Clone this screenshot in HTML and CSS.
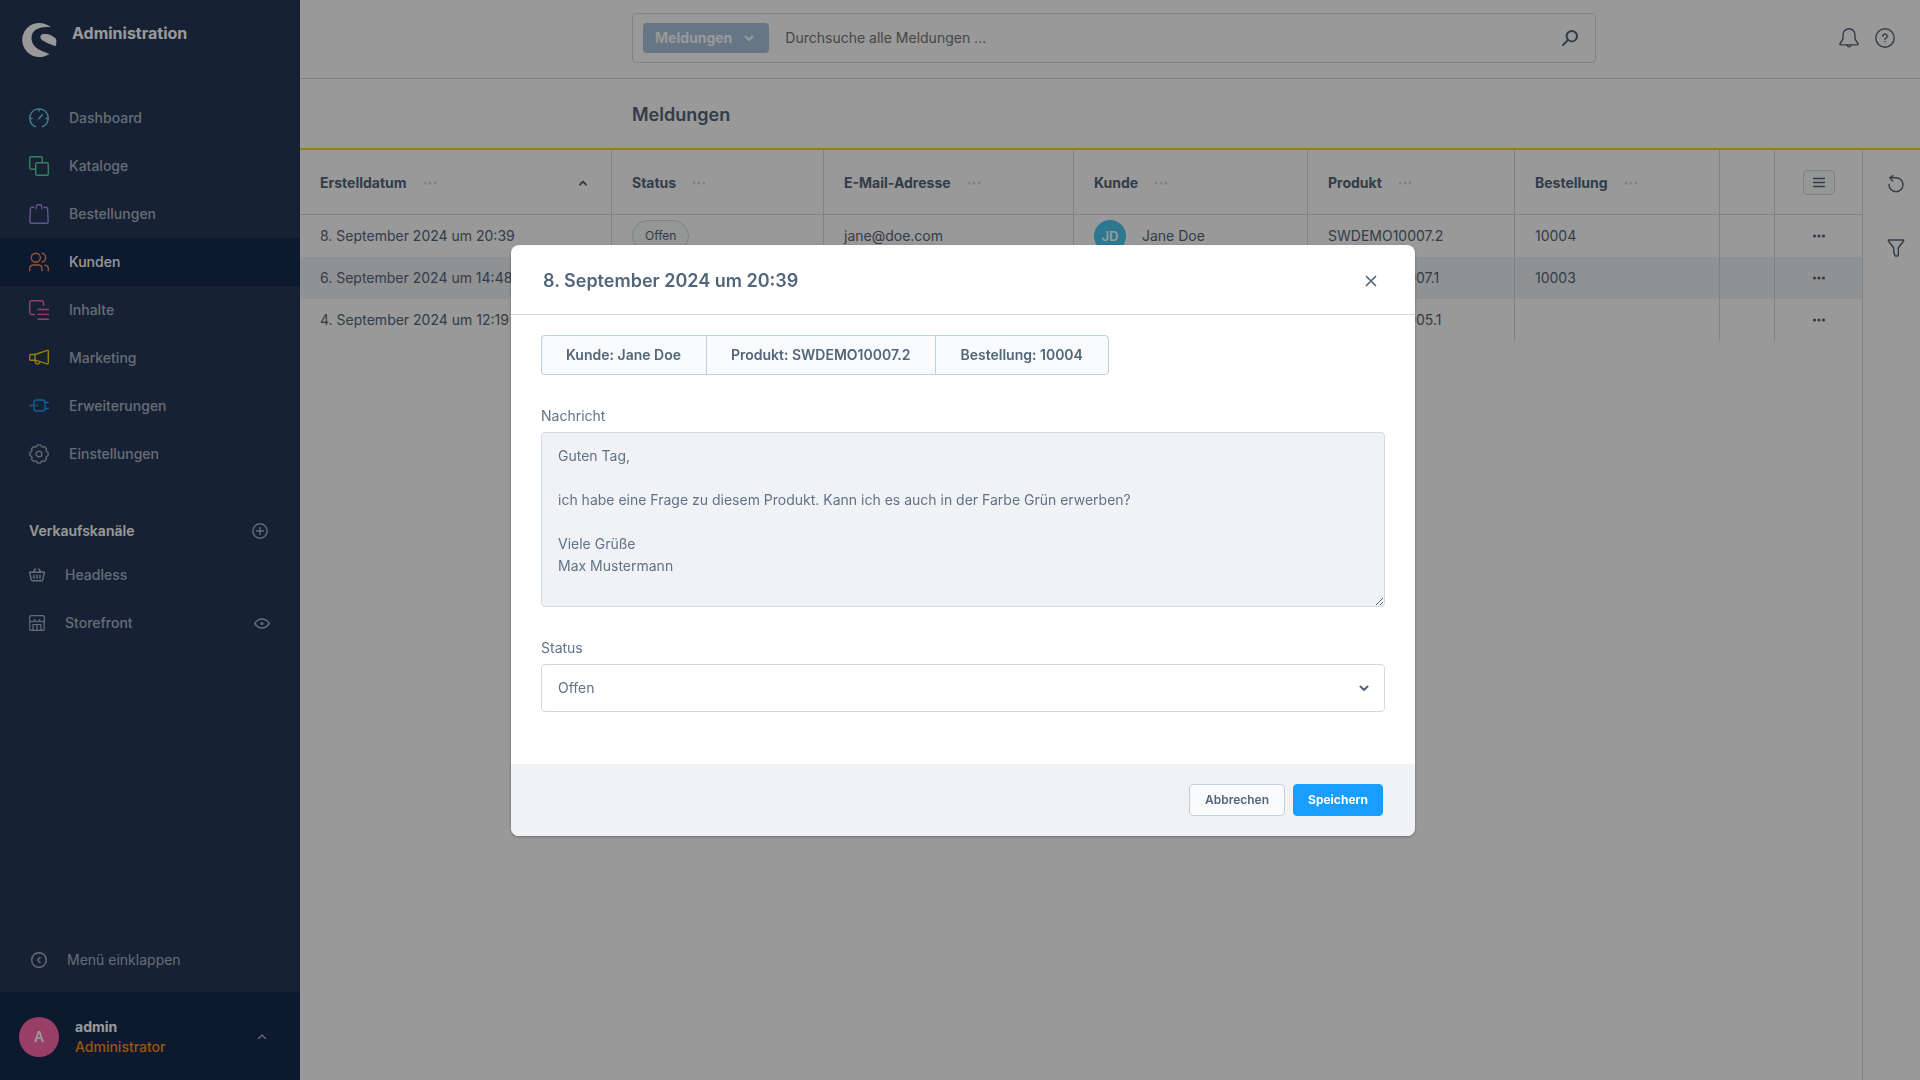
FILE: index.html
```
<!DOCTYPE html>
<html lang="de">
<head>
<meta charset="utf-8">
<meta name="viewport" content="width=device-width, initial-scale=1">
<title>Meldungen</title>
<link rel="stylesheet" href="styles.css">
</head>
<body>
<div class="app">
  <aside class="sidebar">
    <header class="brand">
      <svg class="brand-logo" viewBox="0 0 35 34" aria-hidden="true"><path d="M28.700 4.300C26 1.800 21.500 0 17.200 0a17 17 0 0 0 0 34c3.800 0 7.300-1.100 10.300-3.100C21 28.300 9.500 25.500 9.500 15 9.500 6 19 3.300 28.700 4.300z"/><path d="M21.500 11c-3.500.5-3.900 3.500-2 5.500 2.500 2.500 9.500 5 14 6.800 1-2.800 1.100-5.300.5-7.500-3-3.300-8-5.400-12.500-4.800z"/></svg>
      <span class="brand-name">Administration</span>
    </header>
    <nav class="main-nav">
      <a class="nav-item" href="#dashboard"><svg class="icon icon-20 c-cyan" viewBox="0 0 20 20"><path d="M6.500 18.500H6.200a9.200 9.200 0 1 1 7.600 0h-.3M10 1v2M1 10.500h2M17 10.500h2M9.800 10.800l3.500-4"/></svg>Dashboard</a>
      <a class="nav-item" href="#kataloge"><svg class="icon icon-20 c-green" viewBox="0 0 20 20"><rect x="6.700" y="6.700" width="12.600" height="12.600" rx="1.500"/><path d="M6.700 13.300H2.200a1.500 1.500 0 0 1-1.500-1.500V2.200A1.500 1.500 0 0 1 2.200.7h9.600a1.500 1.500 0 0 1 1.500 1.500v4.500"/></svg>Kataloge</a>
      <a class="nav-item" href="#bestellungen"><svg class="icon icon-20 c-violet" viewBox="0 0 20 20"><path d="M4.800 3.300H3.400a2 2 0 0 0-2 1.900L.8 17.500a1.700 1.700 0 0 0 1.700 1.800h15a1.700 1.700 0 0 0 1.700-1.800L18.600 5.200a2 2 0 0 0-2-1.900h-1.400M7.300 4.500V2.500A1.700 1.700 0 0 1 9 .8h2a1.700 1.700 0 0 1 1.700 1.700v2"/></svg>Bestellungen</a>
      <a class="nav-item active" href="#kunden"><svg class="icon icon-20 c-orange" viewBox="0 0 20 20"><circle cx="6.800" cy="5.700" r="4.500"/><path d="M.7 18.800v-2.300a3.500 3.500 0 0 1 3.500-3.500h5.300a3.500 3.500 0 0 1 3.500 3.500v2.300M13.300 1.300a4.500 4.500 0 0 1 0 8.700M15.700 13.100a3.500 3.500 0 0 1 3.600 3.400v2.300"/></svg>Kunden</a>
      <a class="nav-item" href="#inhalte"><svg class="icon icon-20 c-pink" viewBox="0 0 20 20"><path d="M5.500 14.500H2.700a2 2 0 0 1-2-2v-9.800a2 2 0 0 1 2-2h9.800a2 2 0 0 1 2 2v2.800M9 9.500h10.500M9 14.400h10.500M9 19.300h10.500"/></svg>Inhalte</a>
      <a class="nav-item" href="#marketing"><svg class="icon icon-20 c-yellow" viewBox="0 0 20 20"><path d="M6 6.500l12.200-4.200a.8.8 0 0 1 1.100.7v12a.8.8 0 0 1-1.100.8L6 12.200zM6 6.500H1.700a1 1 0 0 0-1 1v3.700a1 1 0 0 0 1 1H6M6.200 12.200v1.600a2.300 2.300 0 0 0 4.500.600"/></svg>Marketing</a>
      <a class="nav-item" href="#erweiterungen"><svg class="icon icon-20 c-blue" viewBox="0 0 20 20"><rect x="5" y="4" width="11" height="11" rx="2.500"/><path d="M.8 9.500H5M16 6.500h3.300M16 12.500h3.300M8 9v1"/></svg>Erweiterungen</a>
      <a class="nav-item" href="#einstellungen"><svg class="icon icon-20 c-grey" viewBox="0 0 20 20"><path d="M19.100 8.400v3.200q-3.100.9-1.600 3.700l-2.200 2.200q-2.800-1.500-3.700 1.600H8.400q-.9-3.100-3.700-1.600l-2.200-2.200q1.500-2.800-1.600-3.700V8.400Q4 7.500 2.500 4.700l2.200-2.200Q7.500 4 8.400.9h3.200q.9 3.100 3.700 1.600l2.200 2.200Q16 7.500 19.100 8.400z"/><circle cx="10" cy="10" r="2.900"/></svg>Einstellungen</a>
    </nav>
    <section class="channels">
      <div class="channels-head">
        <h2 class="channels-title">Verkaufskanäle</h2>
        <button class="icon-button" type="button" aria-label="Verkaufskanal hinzufügen"><svg class="icon icon-16" viewBox="0 0 16 16"><circle cx="8" cy="8" r="7.200"/><path d="M8 4.500v7M4.500 8h7"/></svg></button>
      </div>
      <div class="channel">
        <a class="channel-link" href="#headless"><svg class="icon icon-16" viewBox="0 0 16 16"><path d="M.6 5.200h14.800v1.300a1 1 0 0 1-.6.900l-1 5.200a1.500 1.500 0 0 1-1.500 1.100H3.700a1.500 1.500 0 0 1-1.500-1.100l-1-5.200a1 1 0 0 1-.6-.9zM4.500 4.500l1.800-2.500M11.500 4.500L9.700 2M5 8.300v3M8 8.300v3M11 8.300v3"/></svg>Headless</a>
      </div>
      <div class="channel">
        <a class="channel-link" href="#storefront"><svg class="icon icon-16 thin" viewBox="0 0 16 16"><path d="M.8 6v8.200a1.200 1.200 0 0 0 1.200 1.200h12a1.200 1.200 0 0 0 1.200-1.200V6M.6 4.500V2.100A1.500 1.500 0 0 1 2.100.6h11.800a1.500 1.500 0 0 1 1.500 1.500v2.400M.6 4.500c0 3 4.900 3 4.900 0 0 3 5 3 5 0 0 3 4.900 3 4.900 0M4 15.400V9.500h8v5.900M8 9.500v5.900"/></svg>Storefront</a>
        <button class="icon-button" type="button" aria-label="Storefront ansehen"><svg class="icon icon-16" viewBox="0 0 16 16"><path d="M.7 8.500C2.500 5.700 5 4 8 4s5.500 1.700 7.300 4.500C13.500 11.300 11 13 8 13S2.500 11.300.7 8.500z"/><circle cx="8" cy="8.500" r=".8"/></svg></button>
      </div>
    </section>
    <button class="collapse" type="button"><svg class="icon icon-16" viewBox="0 0 16 16"><circle cx="8" cy="8" r="7.300"/><path d="M9 5.500L6.500 8 9 10.500"/></svg>Menü einklappen</button>
    <footer class="user">
      <span class="user-avatar">A</span>
      <span class="user-text"><span class="user-name">admin</span><span class="user-role">Administrator</span></span>
      <button class="icon-button" type="button" aria-label="Benutzermenü"><svg class="icon icon-16" viewBox="0 0 16 16"><path d="M4.500 9.500L8 6l3.500 3.500"/></svg></button>
    </footer>
  </aside>

  <main class="page">
    <header class="topbar">
      <div class="search">
        <button class="search-type" type="button">Meldungen<svg class="icon icon-16 bold" viewBox="0 0 16 16"><path d="M4.500 6.500L8 10l3.500-3.500"/></svg></button>
        <input class="search-input" type="search" aria-label="Suche" placeholder="Durchsuche alle Meldungen ...">
        <button class="icon-button" type="button" aria-label="Suchen"><svg class="icon icon-16 bold" viewBox="0 0 16 16"><circle cx="9.800" cy="6.200" r="5.200"/><path d="M6 10l-5 5"/></svg></button>
      </div>
      <div class="topbar-tools">
        <button class="icon-button" type="button" aria-label="Benachrichtigungen"><svg class="icon icon-20" viewBox="0 0 20 20"><path d="M10 .8a6 6 0 0 0-6 6V11l-2.900 4.500a.9.9 0 0 0 .8 1.400h16.200a.9.9 0 0 0 .8-1.400L16 11V6.800a6 6 0 0 0-6-6zM8 17.500a2.200 2.200 0 0 0 4 0"/></svg></button>
        <button class="icon-button" type="button" aria-label="Hilfe"><svg class="icon icon-20" viewBox="0 0 20 20"><circle cx="10" cy="10" r="9.200"/><path d="M7.900 8.200a2.100 2.100 0 1 1 3.200 1.800c-.7.400-1.100.8-1.100 1.500M10 13.700v.1"/></svg></button>
      </div>
    </header>
    <div class="titlebar"><h1 class="page-title">Meldungen</h1></div>
    <div class="content">
      <div class="grid-area">
        <table class="grid">
          <colgroup><col class="w-date"><col class="w-status"><col class="w-mail"><col class="w-customer"><col class="w-product"><col class="w-order"><col class="w-spare"><col class="w-actions"></colgroup>
          <thead>
            <tr>
              <th scope="col"><div class="th">Erstelldatum<svg class="dots" viewBox="0 0 14 4"><circle cx="2" cy="2" r="1.500"/><circle cx="7" cy="2" r="1.500"/><circle cx="12" cy="2" r="1.500"/></svg><svg class="icon icon-16 bold sort" viewBox="0 0 16 16"><path d="M5 9.600L8 6.600l3 3"/></svg></div></th>
              <th scope="col"><div class="th">Status<svg class="dots" viewBox="0 0 14 4"><circle cx="2" cy="2" r="1.500"/><circle cx="7" cy="2" r="1.500"/><circle cx="12" cy="2" r="1.500"/></svg></div></th>
              <th scope="col"><div class="th">E-Mail-Adresse<svg class="dots" viewBox="0 0 14 4"><circle cx="2" cy="2" r="1.500"/><circle cx="7" cy="2" r="1.500"/><circle cx="12" cy="2" r="1.500"/></svg></div></th>
              <th scope="col"><div class="th">Kunde<svg class="dots" viewBox="0 0 14 4"><circle cx="2" cy="2" r="1.500"/><circle cx="7" cy="2" r="1.500"/><circle cx="12" cy="2" r="1.500"/></svg></div></th>
              <th scope="col"><div class="th">Produkt<svg class="dots" viewBox="0 0 14 4"><circle cx="2" cy="2" r="1.500"/><circle cx="7" cy="2" r="1.500"/><circle cx="12" cy="2" r="1.500"/></svg></div></th>
              <th scope="col"><div class="th">Bestellung<svg class="dots" viewBox="0 0 14 4"><circle cx="2" cy="2" r="1.500"/><circle cx="7" cy="2" r="1.500"/><circle cx="12" cy="2" r="1.500"/></svg></div></th>
              <td></td>
              <td class="actions"><button class="columns-button" type="button" aria-label="Spalten"><svg class="icon icon-12" viewBox="0 0 12 12"><path d="M.5 2.500h11M.5 6.500h11M.5 10.500h11"/></svg></button></td>
            </tr>
          </thead>
          <tbody>
            <tr>
              <td>8. September 2024 um 20:39</td>
              <td><span class="badge">Offen</span></td>
              <td>jane@doe.com</td>
              <td><div class="customer"><span class="customer-avatar">JD</span>Jane Doe</div></td>
              <td>SWDEMO10007.2</td>
              <td>10004</td>
              <td></td>
              <td class="actions"><button class="icon-button" type="button" aria-label="Aktionen"><svg class="dots dark" viewBox="0 0 14 4"><circle cx="2.500" cy="2" r="1.600"/><circle cx="7" cy="2" r="1.600"/><circle cx="11.500" cy="2" r="1.600"/></svg></button></td>
            </tr>
            <tr>
              <td>6. September 2024 um 14:48</td>
              <td></td>
              <td></td>
              <td></td>
              <td>SWDEMO10007.1</td>
              <td>10003</td>
              <td></td>
              <td class="actions"><button class="icon-button" type="button" aria-label="Aktionen"><svg class="dots dark" viewBox="0 0 14 4"><circle cx="2.500" cy="2" r="1.600"/><circle cx="7" cy="2" r="1.600"/><circle cx="11.500" cy="2" r="1.600"/></svg></button></td>
            </tr>
            <tr>
              <td>4. September 2024 um 12:19</td>
              <td></td>
              <td></td>
              <td></td>
              <td>SWDEMO10005.1</td>
              <td></td>
              <td></td>
              <td class="actions"><button class="icon-button" type="button" aria-label="Aktionen"><svg class="dots dark" viewBox="0 0 14 4"><circle cx="2.500" cy="2" r="1.600"/><circle cx="7" cy="2" r="1.600"/><circle cx="11.500" cy="2" r="1.600"/></svg></button></td>
            </tr>
          </tbody>
        </table>
      </div>
      <div class="side-tools">
        <button class="icon-button" type="button" aria-label="Aktualisieren"><svg class="icon icon-18" viewBox="0 0 18 18"><path d="M2 9.500a7 7 0 1 0 7-6.800H3M6 .7L2.800 2.900l2.700 3"/></svg></button>
        <button class="icon-button" type="button" aria-label="Filter"><svg class="icon icon-18" viewBox="0 0 18 18"><path d="M2 1h14a.6.600 0 0 1 .5 1L11.300 9v7a1 1 0 0 1-1 1H8.700a1 1 0 0 1-.8-.6L6.700 13V9L1.500 2A.6.600 0 0 1 2 1z"/></svg></button>
      </div>
    </div>
  </main>
</div>

<div class="backdrop">
  <div class="modal" role="dialog" aria-modal="true" aria-labelledby="modal-title">
    <header class="modal-head">
      <h2 class="modal-title" id="modal-title">8. September 2024 um 20:39</h2>
      <button class="icon-button" type="button" aria-label="Schließen"><svg class="icon icon-16 close" viewBox="0 0 16 16"><path d="M3.500 3.500l9 9M12.500 3.500l-9 9"/></svg></button>
    </header>
    <div class="modal-body">
      <div class="button-group">
        <button class="group-button" type="button">Kunde: Jane Doe</button>
        <button class="group-button" type="button">Produkt: SWDEMO10007.2</button>
        <button class="group-button" type="button">Bestellung: 10004</button>
      </div>
      <div class="field">
        <label class="label" for="message">Nachricht</label>
        <textarea class="textarea" id="message" readonly>Guten Tag,

ich habe eine Frage zu diesem Produkt. Kann ich es auch in der Farbe Grün erwerben?

Viele Grüße
Max Mustermann</textarea>
      </div>
      <div class="field">
        <label class="label" for="status">Status</label>
        <div class="select-wrap">
          <select class="select" id="status"><option>Offen</option></select>
          <svg class="icon icon-16 bold select-arrow" viewBox="0 0 16 16"><path d="M4.500 6.500L8 10l3.500-3.500"/></svg>
        </div>
      </div>
    </div>
    <footer class="modal-foot">
      <button class="button" type="button">Abbrechen</button>
      <button class="button primary" type="button">Speichern</button>
    </footer>
  </div>
</div>
</body>
</html>
```
FILE: styles.css
```
*, *::before, *::after { box-sizing: border-box; }

:root {
  --text: #52667a;
  --text-soft: #5f7388;
  --border: #d1d9e0;
  --tint: #f0f2f5;
}

body {
  margin: 0;
  font: 400 14px/20px Inter, "Liberation Sans", sans-serif;
  color: var(--text);
  background: #fff;
}

h1, h2 { margin: 0; }
a { color: inherit; text-decoration: none; }

button, input, textarea, select { font: inherit; color: inherit; }

.icon {
  flex: none;
  display: block;
  fill: none;
  stroke: currentColor;
  stroke-width: 1.4;
  stroke-linecap: round;
  stroke-linejoin: round;
}
.icon-12 { width: 12px; height: 12px; }
.icon-16 { width: 16px; height: 16px; }
.icon-18 { width: 18px; height: 18px; }
.icon-20 { width: 20px; height: 20px; }
.thin { stroke-width: 1.2; }
.close { stroke-width: 1.7; }
.bold { stroke-width: 2; }

.icon-button {
  display: flex;
  padding: 0;
  border: 0;
  background: none;
}

.app { display: flex; min-height: 100vh; }

/* Sidebar */
.sidebar {
  flex: none;
  display: flex;
  flex-direction: column;
  width: 300px;
  background: #273857;
  color: #a9b5c6;
}
.brand {
  display: flex;
  align-items: flex-start;
  gap: 15px;
  height: 94px;
  padding: 23px 22px 0;
}
.brand-logo { width: 35px; height: 34px; fill: #fff; }
.brand-name { font-size: 16px; font-weight: 700; color: #fff; }

.nav-item {
  display: flex;
  align-items: center;
  gap: 20px;
  height: 48px;
  padding: 0 29px;
  font-weight: 500;
}
.nav-item.active { background: #172b4e; color: #fff; }
.c-cyan { color: #6ad6f0; }
.c-green { color: #57d9a3; }
.c-violet { color: #a092f0; }
.c-orange { color: #f88962; }
.c-pink { color: #ff68b4; }
.c-yellow { color: #ffd700; }
.c-blue { color: #189eff; }
.c-grey { color: #a3aebc; }

.channels { margin-top: 32px; }
.channels-head, .channel {
  display: flex;
  align-items: center;
  justify-content: space-between;
  padding: 0 30px 0 29px;
}
.channels-head { height: 41px; padding-right: 32px; }
.channels-title { font-size: 14px; line-height: 20px; font-weight: 600; color: #fff; }
.channel { height: 48px; font-weight: 500; }
.channel-link { display: flex; align-items: center; gap: 20px; }

.collapse {
  display: flex;
  align-items: center;
  gap: 20px;
  height: 65px;
  margin-top: auto;
  padding: 0 31px;
  border: 0;
  background: none;
}
.user {
  display: flex;
  align-items: center;
  gap: 16px;
  height: 88px;
  padding: 2px 30px 0 19px;
  background: #172b4e;
}
.user-avatar {
  display: grid;
  place-items: center;
  width: 40px;
  height: 40px;
  border-radius: 50%;
  background: #ff68ac;
  color: #fff;
  font-weight: 600;
}
.user-text { flex: 1; display: flex; flex-direction: column; font-weight: 500; }
.user-name { color: #fff; font-weight: 700; }
.user-role { color: #ff8f14; }

/* Page */
.page { flex: 1; min-width: 0; display: flex; flex-direction: column; }
.topbar {
  display: grid;
  grid-template-columns: 332px minmax(0, 1fr) 324px;
  align-items: center;
  height: 79px;
  padding-bottom: 2px;
  border-bottom: 1px solid var(--border);
}
.search {
  grid-column: 2;
  display: flex;
  align-items: center;
  height: 50px;
  padding: 0 17px 0 10px;
  border: 1px solid var(--border);
  border-radius: 4px;
}
.search-type {
  display: flex;
  align-items: center;
  gap: 9px;
  height: 30px;
  padding: 0 12px;
  border: 0;
  border-radius: 4px;
  background: #abc5de;
  color: #fff;
  font-weight: 700;
}
.search-input {
  flex: 1;
  min-width: 0;
  padding: 0 16px;
  border: 0;
  outline: 0;
  background: none;
}
.search-input::placeholder { color: #757575; opacity: 1; }
.topbar-tools {
  display: flex;
  justify-content: flex-end;
  gap: 16px;
  padding-right: 25px;
}
.titlebar {
  display: flex;
  align-items: center;
  height: 71px;
  padding: 2px 0 0 332px;
  border-bottom: 2px solid #ffd700;
}
.page-title { font-size: 18px; line-height: 24px; font-weight: 600; }

.content { flex: 1; display: flex; }
.grid-area { flex: 1; min-width: 0; }

.grid {
  width: 100%;
  table-layout: fixed;
  border-collapse: separate;
  border-spacing: 0;
}
.w-date { width: 312px; }
.w-status { width: 212px; }
.w-mail { width: 250px; }
.w-customer { width: 234px; }
.w-product { width: 207px; }
.w-order { width: 205px; }
.w-spare { width: 55px; }
.w-actions { width: 87px; }

.grid th, .grid td {
  height: 42px;
  padding: 0 20px;
  border-right: 1px solid var(--border);
  text-align: left;
  white-space: nowrap;
}
.grid thead th, .grid thead td {
  height: 65px;
  padding-top: 1px;
  border-bottom: 1px solid var(--border);
  font-weight: 700;
}
.grid th:last-child, .grid td:last-child { border-right: 0; }
.grid tbody tr:nth-child(even) { background: var(--tint); }
.grid .actions { padding: 0; }
.actions button { margin: 0 auto; }

.th { display: flex; align-items: center; gap: 16px; }
.dots { flex: none; display: block; width: 14px; height: 4px; fill: var(--border); }
.dots.dark { fill: var(--text); }
.sort { margin-left: auto; }

.columns-button {
  display: grid;
  place-items: center;
  width: 32px;
  height: 25px;
  padding: 0;
  border: 1px solid var(--border);
  border-radius: 4px;
  background: #f9fafb;
}
.badge {
  display: inline-block;
  height: 32px;
  padding: 0 12px;
  border: 1px solid var(--border);
  border-radius: 16px;
  background: #f9fafb;
  font-size: 12px;
  line-height: 30px;
  vertical-align: middle;
}
.customer { display: flex; align-items: center; gap: 16px; }
.customer-avatar {
  display: grid;
  place-items: center;
  width: 32px;
  height: 32px;
  border-radius: 50%;
  background: #4bc8f1;
  color: #fff;
  font-size: 13px;
  font-weight: 600;
}

.side-tools {
  flex: none;
  display: flex;
  flex-direction: column;
  gap: 46px;
  width: 58px;
  padding: 25px 16px 0 24px;
  border-left: 1px solid var(--border);
}

/* Modal */
.backdrop {
  position: fixed;
  inset: 0;
  display: flex;
  align-items: center;
  justify-content: center;
  padding: 16px 10px 16px 16px;
  background: rgba(0, 0, 0, .4);
}
.modal {
  width: 100%;
  max-width: 904px;
  overflow: hidden;
  border-radius: 8px;
  background: #fff;
  box-shadow: 0 1px 3px rgba(0, 0, 0, .3);
}
.modal-head {
  display: flex;
  align-items: center;
  justify-content: space-between;
  height: 70px;
  padding: 3px 36px 0 32px;
  border-bottom: 1px solid var(--border);
}
.modal-title { font-size: 18px; line-height: 24px; font-weight: 600; }
.modal-body { padding: 20px 30px 52px; }

.button-group { display: flex; }
.group-button {
  height: 40px;
  padding: 0 25px 0 24px;
  border: 1px solid #c3cedb;
  border-right-width: 0;
  background: #f9fafb;
  font-weight: 600;
}
.group-button:first-child { border-radius: 4px 0 0 4px; }
.group-button:last-child { border-right-width: 1px; border-radius: 0 4px 4px 0; }

.field { display: flex; flex-direction: column; gap: 5px; margin-top: 30px; }
.label { line-height: 22px; color: var(--text-soft); }
.textarea {
  display: block;
  width: 100%;
  height: 175px;
  padding: 12px 16px;
  border: 1px solid var(--border);
  border-radius: 4px;
  outline: 0;
  background: var(--tint);
  color: var(--text-soft);
  line-height: 22px;
  resize: vertical;
}
.select-wrap { position: relative; }
.select {
  appearance: none;
  display: block;
  width: 100%;
  height: 48px;
  padding: 0 16px;
  border: 1px solid var(--border);
  border-radius: 4px;
  background: #fff;
  color: var(--text-soft);
}
.select-arrow { position: absolute; top: 16px; right: 13px; pointer-events: none; }

.modal-foot {
  display: flex;
  justify-content: flex-end;
  gap: 8px;
  padding: 20px 32px;
  background: var(--tint);
}
.button {
  height: 32px;
  padding: 0 15px;
  border: 1px solid #c3cedb;
  border-radius: 4px;
  background: #f9fafb;
  font-size: 12px;
  font-weight: 600;
}
.button.primary { padding: 0 14px; border-color: #189eff; background: #189eff; color: #fff; font-weight: 700; }
```
